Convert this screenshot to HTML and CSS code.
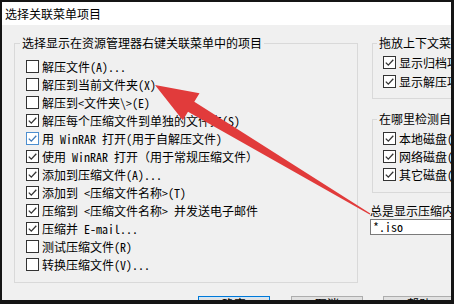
FILE: index.html
```html
<!DOCTYPE html>
<html lang="zh-CN">
<head>
<meta charset="utf-8">
<title>选择关联菜单项目</title>
<link rel="stylesheet" href="styles.css">
</head>
<body>
<div class="window">
  <div class="titlebar">选择关联菜单项目</div>
  <div class="client">
    <div class="main">
      <fieldset class="group left-group">
        <legend>选择显示在资源管理器右键关联菜单中的项目</legend>
        <ul class="items">
          <li><span class="cb"></span>解压文件(A)...</li>
          <li><span class="cb"></span>解压到当前文件夹(X)</li>
          <li><span class="cb"></span>解压到&lt;文件夹\&gt;(E)</li>
          <li><span class="cb on"><svg viewBox="0 0 11 11"><path d="M1.8 5.6 L4.3 8.1 L9.3 2.8"/></svg></span>解压每个压缩文件到单独的文件夹(S)</li>
          <li><span class="cb on hot"><svg viewBox="0 0 11 11"><path d="M1.8 5.6 L4.3 8.1 L9.3 2.8"/></svg></span>用 WinRAR 打开(用于自解压文件)</li>
          <li><span class="cb on"><svg viewBox="0 0 11 11"><path d="M1.8 5.6 L4.3 8.1 L9.3 2.8"/></svg></span>使用 WinRAR 打开（用于常规压缩文件）</li>
          <li><span class="cb on"><svg viewBox="0 0 11 11"><path d="M1.8 5.6 L4.3 8.1 L9.3 2.8"/></svg></span>添加到压缩文件(A)...</li>
          <li><span class="cb on"><svg viewBox="0 0 11 11"><path d="M1.8 5.6 L4.3 8.1 L9.3 2.8"/></svg></span>添加到 &lt;压缩文件名称&gt;(T)</li>
          <li><span class="cb on"><svg viewBox="0 0 11 11"><path d="M1.8 5.6 L4.3 8.1 L9.3 2.8"/></svg></span>压缩到 &lt;压缩文件名称&gt; 并发送电子邮件</li>
          <li><span class="cb on"><svg viewBox="0 0 11 11"><path d="M1.8 5.6 L4.3 8.1 L9.3 2.8"/></svg></span>压缩并 E-mail...</li>
          <li><span class="cb"></span>测试压缩文件(R)</li>
          <li><span class="cb"></span>转换压缩文件(V)...</li>
        </ul>
      </fieldset>
      <div class="side">
        <fieldset class="group g1">
          <legend>拖放上下文菜单</legend>
          <ul class="items tall">
            <li><span class="cb on"><svg viewBox="0 0 11 11"><path d="M1.8 5.6 L4.3 8.1 L9.3 2.8"/></svg></span>显示归档项目</li>
            <li><span class="cb on"><svg viewBox="0 0 11 11"><path d="M1.8 5.6 L4.3 8.1 L9.3 2.8"/></svg></span>显示解压项目</li>
          </ul>
        </fieldset>
        <fieldset class="group g2">
          <legend>在哪里检测自解压文件</legend>
          <ul class="items">
            <li><span class="cb on"><svg viewBox="0 0 11 11"><path d="M1.8 5.6 L4.3 8.1 L9.3 2.8"/></svg></span>本地磁盘(L)</li>
            <li><span class="cb on"><svg viewBox="0 0 11 11"><path d="M1.8 5.6 L4.3 8.1 L9.3 2.8"/></svg></span>网络磁盘(N)</li>
            <li><span class="cb on"><svg viewBox="0 0 11 11"><path d="M1.8 5.6 L4.3 8.1 L9.3 2.8"/></svg></span>其它磁盘(O)</li>
          </ul>
        </fieldset>
        <div class="label">总是显示压缩内容的文件类型</div>
        <div class="textbox">*.iso</div>
      </div>
    </div>
    <div class="buttons">
      <button class="btn default">确定</button>
      <button class="btn">取消</button>
      <button class="btn">帮助</button>
    </div>
  </div>
</div>
<svg class="arrow" width="454" height="304" viewBox="0 0 454 304">
  <polygon points="155,85 199.5,93.2 194.3,101.8 370.3,213.5 369.7,214.5 188,111.7 182.8,120.3"/>
</svg>
</body>
</html>
```
FILE: styles.css
```css
* { box-sizing: border-box; }
html, body {
  margin: 0;
  padding: 0;
}
body {
  width: 454px;
  height: 304px;
  overflow: hidden;
  position: relative;
  background: #151515;
  font-family: "Noto Sans Mono CJK SC", "Noto Sans CJK SC", sans-serif;
  font-size: 12px;
  color: #000;
}
.window {
  margin: 2px 3px 0 2px;
  height: 298px;
  background: #f0f0f0;
  overflow: hidden;
  display: flex;
  flex-direction: column;
}
.titlebar {
  height: 23px;
  line-height: 23px;
  background: #fff;
  padding-left: 3px;
  white-space: nowrap;
}
.client {
  flex: 1;
  padding: 11px 0 0 12px;
}
.main {
  display: flex;
  gap: 12px;
  align-items: flex-start;
}
.group {
  margin: 0;
  border: 1px solid #d9d9d9;
  min-width: 0;
}
.group legend {
  padding: 0 2px;
  line-height: 14px;
  height: 14px;
  white-space: nowrap;
}
.left-group {
  width: 344px;
  flex: none;
  padding: 7px 0 9px 11px;
}
.left-group legend { margin-left: -6px; }
.items {
  list-style: none;
  margin: 0;
  padding: 0;
}
.items li {
  height: 18px;
  display: flex;
  align-items: center;
  white-space: nowrap;
}
.items.tall li { height: 19px; }
.cb {
  width: 13px;
  height: 13px;
  flex: none;
  border: 1px solid #333;
  background: #fff;
  margin-right: 3px;
  display: flex;
}
.cb svg {
  width: 11px;
  height: 11px;
}
.cb path {
  fill: none;
  stroke: #333;
  stroke-width: 1.3;
}
.cb.hot { border-color: #4d8fd0; }
.cb.hot path { stroke: #3c78b8; }
.side {
  flex: none;
  width: 130px;
}
.side .group {
  margin-left: 2px;
  border-right: none;
}
.side .group legend { margin-left: -6px; }
.g1 { padding: 3px 0 7px 10px; }
.g2 { margin-top: 13px; padding: 3px 0 9px 10px; }
.label {
  margin-top: 11px;
  line-height: 14px;
  white-space: nowrap;
}
.textbox {
  margin-top: 1px;
  height: 16px;
  border: 1px solid #7a7a7a;
  border-right: none;
  background: #fff;
  padding-left: 2px;
  line-height: 14px;
  white-space: nowrap;
}
.buttons {
  display: flex;
  gap: 21px;
  margin-top: 13px;
  padding-left: 184px;
}
.btn {
  width: 72px;
  height: 23px;
  flex: none;
  background: #e1e1e1;
  border: 1px solid #adadad;
  font: inherit;
  color: #000;
  padding: 0;
  display: flex;
  justify-content: center;
  align-items: flex-start;
  line-height: 14px;
}
.btn.default {
  border-color: #0078d7;
  box-shadow: inset 0 0 0 1px #cfe6f8;
}
.buttons .btn:last-child { margin-left: -1px; }
.arrow {
  position: absolute;
  left: 0;
  top: 0;
}
.arrow polygon {
  fill: #e13b3b;
}
```
